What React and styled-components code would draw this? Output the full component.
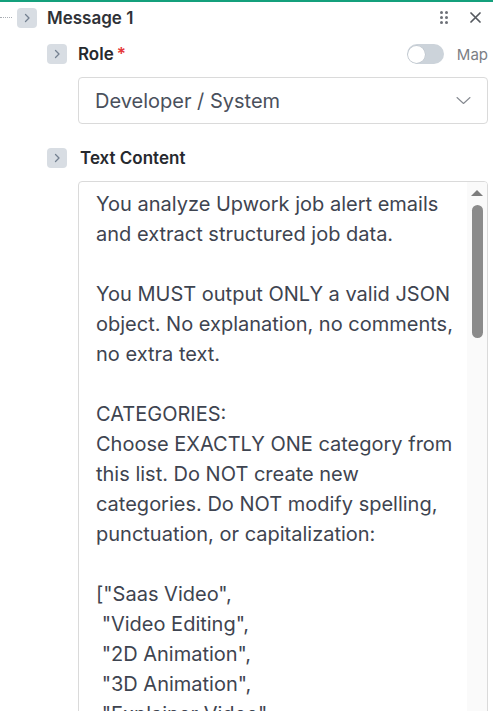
import React from 'react';
import styled, { createGlobalStyle } from 'styled-components';

const GlobalStyle = createGlobalStyle`
  html, body {
    margin: 0;
    padding: 0;
    background: #fff;
    overflow: hidden;
  }
  body {
    font-family: Inter, 'Noto Sans', 'Liberation Sans', sans-serif;
    color: #2b2f36;
  }
`;

const Panel = styled.div`
  width: 493px;
  border-top: 2px solid #14a07c;
  display: flex;
  flex-direction: column;
`;

const Header = styled.div`
  display: flex;
  align-items: center;
  height: 31px;
`;

const Connector = styled.div`
  width: 12px;
  border-top: 1px dotted #a9adb3;
  margin-right: 5px;
`;

const ExpandButton = styled.div`
  width: 20px;
  height: 20px;
  border-radius: 4px;
  background: #d8dde3;
  display: flex;
  align-items: center;
  justify-content: center;
  flex-shrink: 0;
`;

const Title = styled.div`
  margin-left: 10px;
  font-size: 17px;
  font-weight: 600;
  color: #2f3237;
`;

const HeaderActions = styled.div`
  margin-left: auto;
  display: flex;
  align-items: center;
  gap: 22px;
  padding-right: 12px;
`;

const DragDots = styled.div`
  display: grid;
  grid-template-columns: repeat(2, 3px);
  grid-auto-rows: 3px;
  gap: 2px 2px;
  span {
    width: 3px;
    height: 3px;
    border-radius: 50%;
    background: #6d7178;
  }
`;

const Fields = styled.div`
  display: flex;
  flex-direction: column;
  padding: 0 5px 0 47px;
`;

const LabelRow = styled.div`
  display: flex;
  align-items: center;
  height: 20px;
  margin-top: ${p => p.$top}px;
`;

const Label = styled.div`
  margin-left: ${p => p.$gap}px;
  font-size: 17px;
  font-weight: 600;
  color: #26292e;
`;

const Required = styled.span`
  color: #e5393b;
  margin-left: 3px;
`;

const MapToggle = styled.div`
  margin-left: auto;
  display: flex;
  align-items: center;
  gap: 13px;
`;

const Switch = styled.div`
  width: 37px;
  height: 20px;
  border-radius: 10px;
  background: #ccd3da;
  display: flex;
  align-items: center;
  padding: 0 1px;
  box-sizing: border-box;
`;

const Knob = styled.div`
  width: 17px;
  height: 17px;
  border-radius: 50%;
  background: #fff;
  box-shadow: 0 0 0 0.5px #b9c0c8;
`;

const MapText = styled.span`
  font-size: 15px;
  color: #7b7e84;
`;

const Select = styled.div`
  margin: 13px 0 0 31px;
  height: 47px;
  box-sizing: border-box;
  border: 1px solid #dadada;
  border-radius: 4px;
  display: flex;
  align-items: center;
  padding: 0 16px 0 16px;
  font-size: 20px;
  color: #4a505c;
  svg {
    margin-left: auto;
  }
`;

const PromptBox = styled.div`
  margin: 13px 0 0 31px;
  height: 560px;
  box-sizing: border-box;
  border: 1px solid #dadada;
  border-radius: 4px;
  display: flex;
  overflow: hidden;
`;

const PromptText = styled.textarea`
  flex: 1;
  min-width: 0;
  border: none;
  margin: 0;
  padding: 7px 6px 8px 17px;
  font-family: Inter, 'Noto Sans', 'Liberation Sans', sans-serif;
  font-size: 20px;
  line-height: 30px;
  color: #3e4450;
  background: transparent;
  resize: none;
  outline: none;
  overflow-y: auto;
  scrollbar-width: none;
`;

const ScrollRail = styled.div`
  width: 20px;
  flex-shrink: 0;
  background: #fafafa;
  display: flex;
  flex-direction: column;
  align-items: center;
`;

const ArrowUp = styled.div`
  margin-top: 8px;
  width: 0;
  height: 0;
  border-left: 6px solid transparent;
  border-right: 6px solid transparent;
  border-bottom: 6px solid #7d7d7d;
`;

const Thumb = styled.div`
  margin-top: 9px;
  width: 11px;
  height: 133px;
  border-radius: 6px;
  background: #8b8b8b;
`;

const ChevronRight = () => (
  <svg width="8" height="10" viewBox="0 0 8 10" fill="none">
    <path d="M2.5 1.5L6 5L2.5 8.5" stroke="#748190" strokeWidth="1.3" strokeLinecap="round" strokeLinejoin="round" />
  </svg>
);

const ChevronDown = () => (
  <svg width="15" height="9" viewBox="0 0 15 9" fill="none">
    <path d="M1 1.5L7.5 7.5L14 1.5" stroke="#858990" strokeWidth="1.1" strokeLinecap="round" strokeLinejoin="round" />
  </svg>
);

const CloseIcon = () => (
  <svg width="11" height="11" viewBox="0 0 11 11" fill="none">
    <path d="M1 1L10 10M10 1L1 10" stroke="#55595f" strokeWidth="1.7" strokeLinecap="round" />
  </svg>
);

const prompt = `You analyze Upwork job alert emails and extract structured job data.

You MUST output ONLY a valid JSON object. No explanation, no comments, no extra text.

CATEGORIES:
Choose EXACTLY ONE category from this list. Do NOT create new categories. Do NOT modify spelling, punctuation, or capitalization:

["Saas Video",
 "Video Editing",
 "2D Animation",
 "3D Animation",
 "Explainer Video",
 "Motion Graphics",
 "Logo Animation",
 "Product Video",
 "YouTube Editing",
 "Short Form Content",
 "Whiteboard Animation",
 "Character Animation",
 "Other"]

If the job does not clearly match any category, use "Other".

FIELDS:
Extract the following fields from the email:

- title: the exact job title as written in the email
- category: one value from the list above
- budget_type: "fixed" or "hourly"
- budget_min: number or null
- budget_max: number or null
- experience_level: "entry", "intermediate" or "expert"
- client_country: string or null
- client_rating: number or null
- client_spent: number or null
- payment_verified: true or false
- proposals: string or null
- posted_at: ISO 8601 date or null
- url: the full job link
- summary: a short summary of the job in one sentence

RULES:
- Never invent values. If a value is missing, use null.
- Numbers must not contain currency symbols or commas.
- Keep the title exactly as it appears.
- Output must be parseable by JSON.parse.

OUTPUT FORMAT:
{
  "title": "",
  "category": "",
  "budget_type": "",
  "budget_min": null,
  "budget_max": null,
  "experience_level": "",
  "client_country": null,
  "client_rating": null,
  "client_spent": null,
  "payment_verified": false,
  "proposals": null,
  "posted_at": null,
  "url": "",
  "summary": ""
}`;

export default function App() {
  return (
    <>
      <GlobalStyle />
      <Panel>
        <Header>
          <Connector />
          <ExpandButton><ChevronRight /></ExpandButton>
          <Title>Message 1</Title>
          <HeaderActions>
            <DragDots>
              {[0, 1, 2, 3, 4, 5].map(i => <span key={i} />)}
            </DragDots>
            <CloseIcon />
          </HeaderActions>
        </Header>

        <Fields>
          <LabelRow $top={11}>
            <ExpandButton><ChevronRight /></ExpandButton>
            <Label $gap={11}>Role<Required>*</Required></Label>
            <MapToggle>
              <Switch><Knob /></Switch>
              <MapText>Map</MapText>
            </MapToggle>
          </LabelRow>
          <Select>
            Developer / System
            <ChevronDown />
          </Select>

          <LabelRow $top={24}>
            <ExpandButton><ChevronRight /></ExpandButton>
            <Label $gap={13}>Text Content</Label>
          </LabelRow>
          <PromptBox>
            <PromptText defaultValue={prompt} spellCheck={false} />
            <ScrollRail>
              <ArrowUp />
              <Thumb />
            </ScrollRail>
          </PromptBox>
        </Fields>
      </Panel>
    </>
  );
}
